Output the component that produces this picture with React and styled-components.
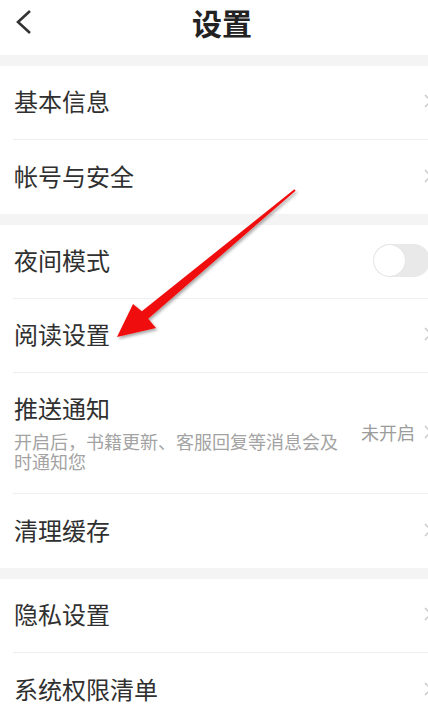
import React from "react";
import styled, { createGlobalStyle } from "styled-components";

const GlobalStyle = createGlobalStyle`
  html, body {
    margin: 0;
    padding: 0;
    background: #ffffff;
    overflow-x: hidden;
  }
  body {
    font-family: "Noto Sans CJK SC", "Noto Sans", sans-serif;
    color: #333333;
  }
`;

const Page = styled.div`
  position: relative;
  width: 444px;
  background: #ffffff;
`;

const Header = styled.div`
  height: 55px;
  padding-top: 2px;
  padding-bottom: 13px;
  box-sizing: border-box;
  display: grid;
  grid-template-columns: 60px 1fr 60px;
  align-items: center;
`;

const BackButton = styled.div`
  display: flex;
  align-items: center;
  padding-left: 15px;
`;

const Title = styled.h1`
  margin: 0;
  text-align: center;
  font-size: 30px;
  font-weight: 700;
  color: #222222;
  line-height: 32px;
`;

const Band = styled.div`
  height: 11px;
  background: #f4f4f4;
`;

const Row = styled.div`
  padding-left: 13px;
  background: #ffffff;
`;

const RowInner = styled.div`
  display: flex;
  align-items: center;
  justify-content: space-between;
  min-height: ${(p) => (p.$tall ? "121px" : "74px")};
  box-sizing: border-box;
  padding-left: 1px;
  padding-bottom: 3px;
  padding-right: ${(p) => (p.$toggle ? "14px" : "12px")};
  border-bottom: ${(p) => (p.$last ? "none" : "1px solid #efefef")};
`;

const TextCol = styled.div`
  display: flex;
  flex-direction: column;
`;

const Label = styled.div`
  font-size: 24px;
  line-height: 30px;
  color: #303030;
`;

const Sub = styled.div`
  margin-top: 8px;
  max-width: 330px;
  font-size: 18px;
  line-height: 20px;
  color: #a3a3a3;
`;

const Right = styled.div`
  display: flex;
  align-items: center;
  gap: 9px;
`;

const Status = styled.span`
  font-size: 18px;
  color: #9c9c9c;
`;

const Toggle = styled.div`
  width: 57px;
  height: 33px;
  border-radius: 17px;
  background: #e9e9e9;
  display: flex;
  align-items: center;
  padding: 0 1px;
  box-sizing: border-box;
`;

const Knob = styled.div`
  width: 31px;
  height: 31px;
  border-radius: 50%;
  background: #ffffff;
  box-shadow: 0 0 1px rgba(0, 0, 0, 0.12);
`;

const ArrowMark = styled.svg`
  position: absolute;
  left: 0;
  top: 0;
  pointer-events: none;
`;

const Chevron = () => (
  <svg width="8" height="14" viewBox="0 0 8 14">
    <path d="M1 1 L7 7 L1 13" fill="none" stroke="#c9c9c9" strokeWidth="1.5" />
  </svg>
);

const BackIcon = () => (
  <svg width="18" height="26" viewBox="0 0 18 26">
    <path d="M15 2 L3 13 L15 24" fill="none" stroke="#333" strokeWidth="2.6" />
  </svg>
);

const Item = ({ label, sub, status, toggle, last }) => (
  <Row>
    <RowInner $tall={!!sub} $toggle={toggle} $last={last}>
      <TextCol>
        <Label>{label}</Label>
        {sub && <Sub>{sub}</Sub>}
      </TextCol>
      {toggle ? (
        <Toggle>
          <Knob />
        </Toggle>
      ) : (
        <Right>
          {status && <Status>{status}</Status>}
          <Chevron />
        </Right>
      )}
    </RowInner>
  </Row>
);

const App = () => {
  return (
    <>
      <GlobalStyle />
      <Page>
        <Header>
          <BackButton>
            <BackIcon />
          </BackButton>
          <Title>设置</Title>
          <div />
        </Header>
        <Band />
        <Item label="基本信息" />
        <Item label="帐号与安全" last />
        <Band />
        <Item label="夜间模式" toggle />
        <Item label="阅读设置" />
        <Item
          label="推送通知"
          sub="开启后，书籍更新、客服回复等消息会及时通知您"
          status="未开启"
        />
        <Item label="清理缓存" last />
        <Band />
        <Item label="隐私设置" />
        <Item label="系统权限清单" last />

        <ArrowMark width="444" height="400">
          <defs>
            <filter id="shade" x="-20%" y="-20%" width="140%" height="140%">
              <feDropShadow dx="1.5" dy="2" stdDeviation="1.5" floodColor="#000" floodOpacity="0.35" />
            </filter>
          </defs>
          <polygon
            points="117,337 156,328 148.2,318.8 295.6,190.8 294.4,189.2 141.8,311.2 133,304"
            fill="#f01010"
            filter="url(#shade)"
          />
        </ArrowMark>
      </Page>
    </>
  );
};

export default App;
